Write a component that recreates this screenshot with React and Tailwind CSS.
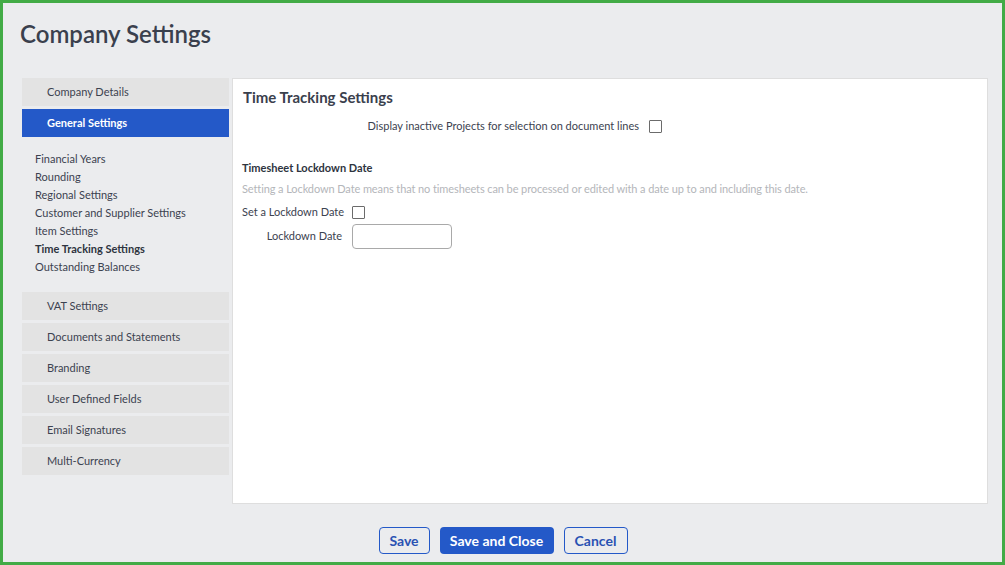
import React, { useState } from "react";

const subLinks = [
  "Financial Years",
  "Rounding",
  "Regional Settings",
  "Customer and Supplier Settings",
  "Item Settings",
  "Time Tracking Settings",
  "Outstanding Balances",
];

const lowerSections = [
  "VAT Settings",
  "Documents and Statements",
  "Branding",
  "User Defined Fields",
  "Email Signatures",
  "Multi-Currency",
];

const Checkbox = ({ checked, onChange }) => (
  <div
    onClick={onChange}
    className="w-[13px] h-[13px] border border-[#6b6b6b] bg-white rounded-[1px] cursor-pointer shrink-0"
  >
    {checked && (
      <svg viewBox="0 0 12 12" className="w-full h-full">
        <path d="M2 6l3 3 5-6" fill="none" stroke="#2459c8" strokeWidth="2" />
      </svg>
    )}
  </div>
);

const App = () => {
  const [showInactive, setShowInactive] = useState(false);
  const [lockdown, setLockdown] = useState(false);
  const [lockdownDate, setLockdownDate] = useState("");

  return (
    <div
      className="w-[1005px] h-[565px] border-[3px] border-[#42ab46] bg-[#ebecee] flex flex-col text-[#3c4250]"
      style={{ fontFamily: "Lato, 'Open Sans', sans-serif" }}
    >
      {/* Page Title */}
      <h1 className="pl-[17px] pt-[15px] text-[24px] leading-[32px] font-semibold text-[#3a404d]">
        Company Settings
      </h1>

      <div className="flex mt-[28px] ml-[19px] gap-[3px]">
        {/* Sidebar */}
        <div className="w-[207px] flex flex-col text-[11px]">
          <div className="h-[28px] flex items-center pl-[25px] bg-[#e3e3e3]">
            Company Details
          </div>
          <div className="h-[28px] mt-[3px] flex items-center pl-[25px] bg-[#2459c8] text-white font-bold">
            General Settings
          </div>

          <div className="mt-[13px] pl-[13px] flex flex-col">
            {subLinks.map((link) => (
              <div
                key={link}
                className={`h-[18px] leading-[18px] ${
                  link === "Time Tracking Settings"
                    ? "font-bold text-[#2e3440]"
                    : ""
                }`}
              >
                {link}
              </div>
            ))}
          </div>

          <div className="mt-[16px] flex flex-col gap-[3px]">
            {lowerSections.map((section) => (
              <div
                key={section}
                className="h-[28px] flex items-center pl-[25px] bg-[#e3e3e3]"
              >
                {section}
              </div>
            ))}
          </div>
        </div>

        {/* Main Panel */}
        <div className="w-[756px] h-[426px] bg-white border border-[#dedede] pl-[9px] text-[11px]">
          <h2 className="mt-[8px] ml-px text-[15px] leading-[20px] font-bold text-[#3a404d]">
            Time Tracking Settings
          </h2>

          <div className="flex items-center mt-[11px] h-[16px]">
            <span className="w-[397px] text-right">
              Display inactive Projects for selection on document lines
            </span>
            <div className="ml-[10px]">
              <Checkbox
                checked={showInactive}
                onChange={() => setShowInactive((prev) => !prev)}
              />
            </div>
          </div>

          <h3 className="mt-[26px] font-bold leading-[16px] text-[#2e3440]">
            Timesheet Lockdown Date
          </h3>
          <p className="mt-[5px] leading-[16px] text-[#b4b6ba] tracking-[-0.1px]">
            Setting a Lockdown Date means that no timesheets can be processed or
            edited with a date up to and including this date.
          </p>

          <div className="flex items-center mt-[7px] h-[16px]">
            <span className="w-[100px] whitespace-nowrap">Set a Lockdown Date</span>
            <div className="ml-[10px]">
              <Checkbox
                checked={lockdown}
                onChange={() => setLockdown((prev) => !prev)}
              />
            </div>
          </div>

          <div className="flex items-center mt-[4px]">
            <span className="w-[100px] text-right">Lockdown Date</span>
            <input
              type="text"
              value={lockdownDate}
              onChange={(e) => setLockdownDate(e.target.value)}
              className="ml-[10px] w-[100px] h-[25px] border border-[#a9a9a9] rounded-[4px] px-2 outline-none"
            />
          </div>
        </div>
      </div>

      {/* Footer Buttons */}
      <div className="flex justify-center gap-[10px] mt-[23px] ml-[1px] text-[14px] font-bold">
        <button className="w-[51px] h-[27px] border border-[#2459c8] rounded-[4px] text-[#2a52b3] bg-transparent">
          Save
        </button>
        <button className="w-[114px] h-[27px] rounded-[4px] bg-[#2459c8] text-white">
          Save and Close
        </button>
        <button className="w-[64px] h-[27px] border border-[#2459c8] rounded-[4px] text-[#2a52b3] bg-transparent">
          Cancel
        </button>
      </div>
    </div>
  );
};

export default App;
